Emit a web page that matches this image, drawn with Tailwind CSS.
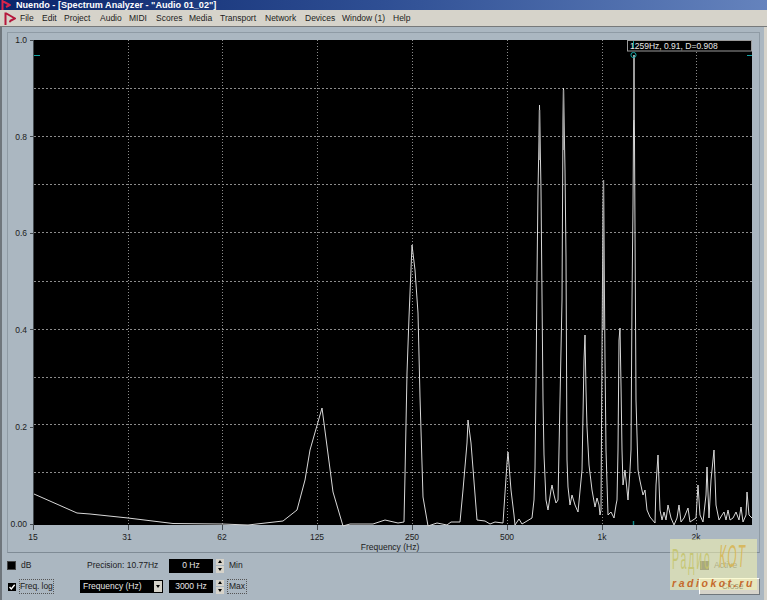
<!DOCTYPE html>
<html>
<head>
<meta charset="utf-8">
<script src="https://cdn.jsdelivr.net/npm/@tailwindcss/browser@4"></script>
</head>
<body class="m-0 bg-[#abb7c1]">
<div class="relative w-[767px] h-[600px] overflow-hidden flex flex-col font-['Liberation_Sans',Arial,sans-serif] text-[8.5px] text-[#1c1c1c]">
  <!-- title bar -->
  <div class="h-[10px] shrink-0 bg-gradient-to-r from-[#0a246a] via-[#2f4f94] to-[#6583bd] flex items-center overflow-hidden">
    <svg class="ml-[1px] w-[10px] h-[11px] shrink-0" viewBox="0 0 10 11"><path d="M1.5 0V11M1.5 1L9 5L5 7" fill="none" stroke="#d8244a" stroke-width="2"/></svg>
    <span class="ml-[5px] text-white font-bold text-[9.1px] leading-[8px] whitespace-pre">Nuendo - [Spectrum Analyzer - "Audio 01_02"]</span>
  </div>
  <!-- menu -->
  <div class="h-[17px] shrink-0 bg-[#d6d3ca] border-b border-[#77797a] flex items-center pl-[4px]">
    <svg class="w-[12px] h-[13px] shrink-0 mr-[4px]" viewBox="0 0 12 13"><path d="M1.5 0.5V13M1.5 1L11 6.5L6 9" fill="none" stroke="#b5173c" stroke-width="2"/><circle cx="6" cy="9.5" r="1" fill="#b5173c"/></svg>
    <span class="w-[22px]">File</span><span class="w-[22px]">Edit</span><span class="w-[36px]">Project</span><span class="w-[29px]">Audio</span><span class="w-[27px]">MIDI</span><span class="w-[33px]">Scores</span><span class="w-[31px]">Media</span><span class="w-[45px]">Transport</span><span class="w-[40px]">Network</span><span class="w-[37px]">Devices</span><span class="w-[51px]">Window (1)</span><span>Help</span>
  </div>
  <!-- main -->
  <div class="flex-1 flex flex-col border-l-2 border-l-[#6f767c] border-r-[3px] border-r-[#d6d3ca] bg-[#abb7c1] pl-[5px] pr-[4px] pt-[5px]">
    <div class="w-[753px] h-[521px] shrink-0 border border-[#8f9ba5] border-b-[#7f8b95]">
      <svg class="block" width="751" height="519" viewBox="8 33 751 519" font-family="Liberation Sans, Arial, sans-serif" font-size="8.5" fill="#1c1c1c">
        <rect x="34" y="40" width="718" height="485" fill="#000"/>
        <g stroke="#8c8c8c" stroke-width="1" stroke-dasharray="2 2">
          <path d="M34 88.5H752M34 136.5H752M34 184.5H752M34 232.5H752M34 281.5H752M34 329.5H752M34 377.5H752M34 424.5H752M34 472.5H752"/>
        </g>
        <g stroke="#8c8c8c" stroke-width="1" stroke-dasharray="1 2">
          <path d="M128.5 40V525M222.5 40V525M317.5 40V525M412.5 40V525M507.5 40V525M602.5 40V525M696.5 40V525"/>
        </g>
        <g stroke="#444b50" stroke-width="1">
          <path d="M33.5 40V530M30 40.5H34M30 136.5H34M30 233.5H34M30 329.5H34M30 427.5H34M30 524.5H34"/>
          <path d="M128.5 525V530M222.5 525V530M317.5 525V530M412.5 525V530M507.5 525V530M602.5 525V530M696.5 525V530"/>
        </g>
        <g text-anchor="end">
          <text x="27" y="43">1.0</text>
          <text x="27" y="140">0.8</text>
          <text x="27" y="236">0.6</text>
          <text x="27" y="333">0.4</text>
          <text x="27" y="430">0.2</text>
          <text x="27" y="527">0.00</text>
        </g>
        <g text-anchor="middle">
          <text x="33" y="540">15</text>
          <text x="127" y="540">31</text>
          <text x="222" y="540">62</text>
          <text x="317" y="540">125</text>
          <text x="412" y="540">250</text>
          <text x="507" y="540">500</text>
          <text x="602" y="540">1k</text>
          <text x="696" y="540">2k</text>
          <text x="390" y="550">Frequency (Hz)</text>
        </g>
        <polyline fill="none" stroke="#d8d8d8" stroke-width="1" stroke-linejoin="bevel" points="34,494 77,513 90,514 128,518 173,523.5 222,524 248,525 283,521 297,510 305,480 310,450 322,408 333,492 343,526 350,524 373,524 385,520 398,523 404,522 405,475 407,373 409,317 412,245 415,270 418,313 420,397 423,497 428,526 437,523 447,525 451,522 460,522 463,490 467,443 468,420 471,443 477,520 485,521 490,524 495,522 503,523 507,463 508,452 511,490 514,515 515,525 519,519 522,524 527,521 532,518 534,500 535,468 536,387 537,277 538,190 539,140 539.5,105 541,190 542,296 543,400 544,455 546,500 548,510 551,490 552,485 554,495 556,503 558,500 560,400 562,300 563,120 563.5,88 565,170 566,257 567,460 568,487 570,505 572,495 575,505 578,512 582,470 584,360 585,335 586,390 587,427 589,465 592,490 595,507 597,498 599,505 600,515 601,510 602,350 603,210 603.5,180 604,240 605,360 606,450 608,515 611,512 614,518 616,505 617,500 618,450 619,340 620,328 621,385 622,450 623,485 625,470 626,480 628,500 630,470 631,450 632,300 633,205 634,55 635,230 636,400 638,470 640,481 643,495 645,490 647,510 650,517 655,523 656,485 658,455 660,510 662,520 664,512 666,520 668,505 671,518 674,525 677,518 679,505 681,522 684,518 688,508 690,522 693,520 696,518 698,485 700,515 703,522 706,495 707,467 709,518 711,480 714,450 716,505 719,520 722,515 724,512 726,520 728,510 730,520 733,518 736,512 739,520 741,507 743,522 746,515 747,492 749,515 752,518"/>
        <path d="M634 55V120M539.5 110V160M563.5 90V150M603.5 180V330" stroke="#9a9a9a" stroke-width="1.4" fill="none"/>
        <!-- cursor readout -->
        <rect x="627.5" y="40.5" width="124" height="10.5" fill="#000" stroke="#9a9a9a"/>
        <text x="630" y="48.5" fill="#e8e8e8">1259Hz, 0.91, D=0.908</text>
        <path d="M633.5 41V48" stroke="#12a0a0" stroke-width="1"/>
        <circle cx="633.5" cy="55" r="2.6" fill="none" stroke="#12a5a5" stroke-width="1"/>
        <path d="M747 55.5H752M34 55.5H40" stroke="#12a5a5" stroke-width="1"/>
        <path d="M633.5 521V525" stroke="#0f8a8a" stroke-width="1.4"/>
      </svg>
    </div>
    <!-- controls -->
    <div class="h-[47px] pt-[5px] grid grid-cols-[73px_89px_44px_13px_30px_1fr_61px] grid-rows-[15px_15px] gap-y-[6px] items-center">
      <div class="flex items-center"><span class="w-[9px] h-[9px] bg-black border border-[#444]"></span><span class="ml-[5px]">dB</span></div>
      <div class="pl-[7px] whitespace-nowrap">Precision: 10.77Hz</div>
      <div class="h-[14px] bg-black text-[#e6e6e6] flex items-center justify-center">0 Hz</div>
      <div class="h-[14px] w-[8px] ml-[3px] flex flex-col gap-px">
        <span class="flex-1 bg-[#d6d3ca] flex items-center justify-center"><span class="border-x-[2px] border-x-transparent border-b-[3px] border-b-black"></span></span>
        <span class="flex-1 bg-[#d6d3ca] flex items-center justify-center"><span class="border-x-[2px] border-x-transparent border-t-[3px] border-t-black"></span></span>
      </div>
      <div class="pl-[3px]">Min</div>
      <div></div>
      <div class="flex items-center pl-[1px]"><span class="w-[9px] h-[9px] bg-[#4d4d45]"></span><span class="ml-[5px] text-[#56564f]">Active</span></div>

      <div class="flex items-center pl-[1px]"><span class="w-[8px] h-[8px] bg-black flex items-center justify-center"><svg class="w-[8px] h-[8px]" viewBox="0 0 8 8"><path d="M1.5 4L3.3 6L6.7 1.8" fill="none" stroke="#fff" stroke-width="1.4"/></svg></span><span class="ml-[3px] border border-dotted border-[#555] leading-[13px] whitespace-nowrap tracking-[-0.1px]">Freq. log</span></div>
      <div class="w-[83px] h-[13px] bg-black text-[#e6e6e6] flex items-center justify-between pl-[3px] pr-[1px]"><span>Frequency (Hz)</span><span class="w-[8px] h-[11px] bg-[#d6d3ca] flex items-center justify-center"><span class="border-x-[2px] border-x-transparent border-t-[3px] border-t-black"></span></span></div>
      <div class="h-[13px] bg-black text-[#e6e6e6] flex items-center justify-center">3000 Hz</div>
      <div class="h-[14px] w-[8px] ml-[3px] flex flex-col gap-px">
        <span class="flex-1 bg-[#d6d3ca] flex items-center justify-center"><span class="border-x-[2px] border-x-transparent border-b-[3px] border-b-black"></span></span>
        <span class="flex-1 bg-[#d6d3ca] flex items-center justify-center"><span class="border-x-[2px] border-x-transparent border-t-[3px] border-t-black"></span></span>
      </div>
      <div class="ml-[1px] w-[20px] h-[15px] border border-dotted border-[#555] flex items-center justify-center">Max</div>
      <div></div>
      <div class="h-[17px] bg-[#d6d3ca] border-t border-l border-t-white border-l-white border-r border-b border-r-[#6f767c] border-b-[#6f767c] flex items-center justify-center pl-[6px] text-[#333]">Close</div>
    </div>
  </div>
  <!-- watermark over the window -->
  <div class="absolute left-[670px] top-[539px] w-[87px] h-[51px] bg-[#f5f5b0]/55 overflow-hidden">
    <span class="absolute left-[2px] top-[5px] text-[17px] leading-[17px] text-[#c4c46a]/85 origin-top-left scale-x-[0.62] scale-y-[1.75] whitespace-nowrap tracking-[3px]">Радио</span>
    <span class="absolute left-[49px] top-[1px] text-[20px] leading-[20px] italic text-[#d8b450]/85 origin-top-left scale-x-[0.6] scale-y-[1.6] whitespace-nowrap tracking-[2px]">КОТ</span>
    <span class="absolute left-[2px] top-[38px] text-[10.5px] leading-[12px] font-bold italic text-[#c56a2c] tracking-[2.55px] whitespace-nowrap">radiokot.ru</span>
  </div>
</div>
</body>
</html>
